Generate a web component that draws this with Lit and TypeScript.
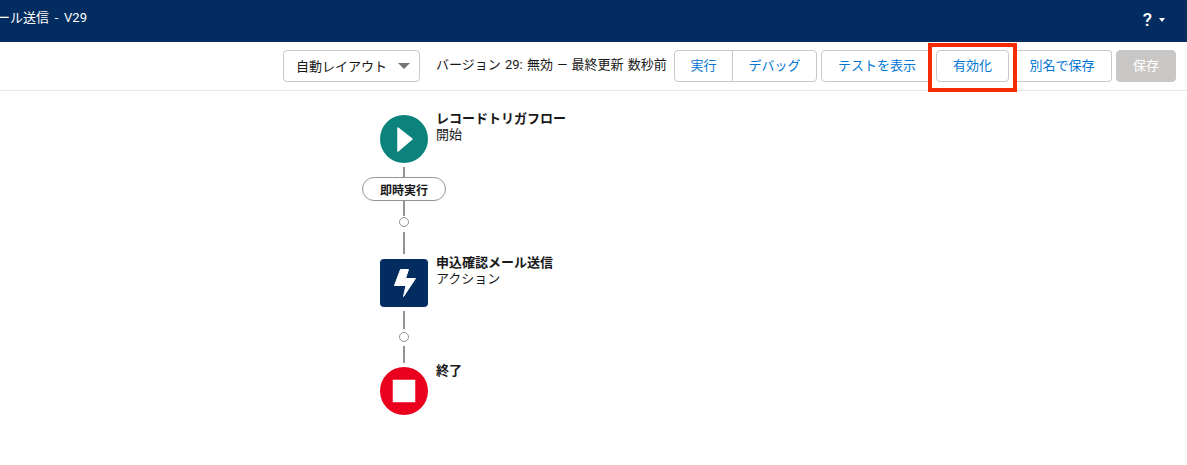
import { LitElement, html, css } from 'lit';
import { customElement } from 'lit/decorators.js';

@customElement('app-root')
export class AppRoot extends LitElement {
  static styles = css`
    :host {
      display: block;
      height: 465px;
      overflow: hidden;
      background: #fff;
      color: #181818;
      font-family: Roboto, 'Noto Sans CJK JP', sans-serif;
      font-size: 13px;
    }
    .header {
      height: 42px;
      background: #032d60;
      color: #fff;
      display: flex;
      justify-content: space-between;
      overflow: hidden;
    }
    .title {
      margin: 10px 0 0 -3px;
      line-height: 16px;
      word-spacing: 2.5px;
    }
    .help {
      display: flex;
      align-items: center;
      gap: 7px;
      margin: 0 22px 3px 0;
      font-size: 19px;
      font-weight: 500;
    }
    .caret {
      width: 0;
      height: 0;
      border: 3px solid transparent;
      border-top: 4px solid #fff;
      border-bottom: 0;
    }
    .toolbar {
      height: 49px;
      box-sizing: border-box;
      border-bottom: 1px solid #e5e5e5;
      padding: 8px 11px 0 283px;
      display: flex;
      align-items: flex-start;
    }
    .select {
      width: 137px;
      height: 32px;
      box-sizing: border-box;
      border: 1px solid #c9c9c9;
      border-radius: 4px;
      padding: 0 9px 2px 12px;
      display: flex;
      align-items: center;
      justify-content: space-between;
    }
    .select i {
      width: 0;
      height: 0;
      margin-top: 2px;
      border: 6px solid transparent;
      border-top: 6px solid #747474;
      border-bottom: 0;
    }
    .version {
      margin-left: 16px;
      width: 238px;
      line-height: 30px;
      white-space: nowrap;
      word-spacing: 1px;
    }
    .btn {
      height: 32px;
      box-sizing: border-box;
      border: 1px solid #c9c9c9;
      border-radius: 4px;
      padding-bottom: 3px;
      background: #fff;
      color: #0176d3;
      display: flex;
      align-items: center;
      justify-content: center;
    }
    .run { width: 59px; border-radius: 4px 0 0 4px; }
    .debug { width: 85px; margin-left: -1px; border-radius: 0 4px 4px 0; }
    .test { width: 112px; margin-left: 4px; border-radius: 4px 0 0 4px; }
    .activate { width: 73px; }
    .saveas { width: 95px; padding-right: 4px; border-radius: 0 4px 4px 0; border-left: 0; }
    .save {
      width: 60px;
      margin-left: 4px;
      background: #c9c7c5;
      border-color: #c9c7c5;
      color: #fff;
    }
    .mark {
      position: relative;
      margin: -7px 0 0 -5px;
      padding: 3px 4px 0;
      border: 4px solid #f62b02;
      background: #fff;
      height: 49px;
      box-sizing: border-box;
      display: flex;
      align-items: flex-start;
    }
    .canvas {
      padding: 24px 0 0 380px;
    }
    .node {
      display: flex;
      gap: 8px;
      height: 48px;
    }
    .icon {
      flex: none;
      width: 48px;
      height: 48px;
    }
    .label {
      margin-top: -4px;
      line-height: 16px;
      white-space: nowrap;
    }
    .label b {
      display: block;
    }
    .link {
      width: 48px;
      display: flex;
      flex-direction: column;
      align-items: center;
    }
    .line {
      width: 2px;
      background: #939393;
    }
    .dot {
      flex: none;
      width: 10px;
      height: 10px;
      box-sizing: border-box;
      border: 1px solid #939393;
      border-radius: 50%;
      margin: 1px 0;
    }
    .pill {
      flex: none;
      width: 84px;
      height: 24px;
      box-sizing: border-box;
      border: 1px solid #939393;
      border-radius: 12px;
      background: #fff;
      font-size: 12px;
      font-weight: 700;
      display: flex;
      align-items: center;
      justify-content: center;
    }
  `;

  render() {
    return html`
      <div class="header">
        <div class="title">ール送信 - V29</div>
        <div class="help"><span>?</span><span class="caret"></span></div>
      </div>
      <div class="toolbar">
        <div class="select"><span>自動レイアウト</span><i></i></div>
        <div class="version">バージョン 29: 無効 — 最終更新 数秒前</div>
        <div class="btn run">実行</div>
        <div class="btn debug">デバッグ</div>
        <div class="btn test">テストを表示</div>
        <div class="mark"><div class="btn activate">有効化</div></div>
        <div class="btn saveas">別名で保存</div>
        <div class="btn save">保存</div>
      </div>
      <div class="canvas">
        <div class="node">
          <svg class="icon" viewBox="0 0 48 48">
            <circle cx="24" cy="24" r="24" fill="#0b827c"></circle>
            <path d="M18 13 L32 24 L18 36 Z" fill="#fff" stroke="#fff" stroke-width="1.5" stroke-linejoin="round"></path>
          </svg>
          <div class="label"><b>レコードトリガフロー</b>開始</div>
        </div>
        <div class="link">
          <div class="line" style="height:10px;margin-top:4px"></div>
          <div class="pill">即時実行</div>
          <div class="line" style="height:15px"></div>
          <div class="dot"></div>
          <div class="line" style="height:22px;margin-top:4px"></div>
        </div>
        <div class="node" style="margin-top:5px">
          <svg class="icon" viewBox="0 0 48 48">
            <rect width="48" height="48" rx="4" fill="#032d60"></rect>
            <path d="M20.5 10.5 H28.5 L25.5 19.5 H35.5 L23.5 37.5 L26 26.5 H14.5 Z" fill="#fff" stroke="#fff" stroke-width="1" stroke-linejoin="round"></path>
          </svg>
          <div class="label"><b>申込確認メール送信</b>アクション</div>
        </div>
        <div class="link">
          <div class="line" style="height:18px;margin-top:4px"></div>
          <div class="dot" style="margin-top:3px"></div>
          <div class="line" style="height:17px;margin-top:3px"></div>
        </div>
        <div class="node" style="margin-top:4px">
          <svg class="icon" viewBox="0 0 48 48">
            <circle cx="24" cy="24" r="24" fill="#ea001e"></circle>
            <rect x="12.75" y="12.75" width="22.5" height="22.5" fill="#fff"></rect>
          </svg>
          <div class="label"><b>終了</b></div>
        </div>
      </div>
    `;
  }
}
